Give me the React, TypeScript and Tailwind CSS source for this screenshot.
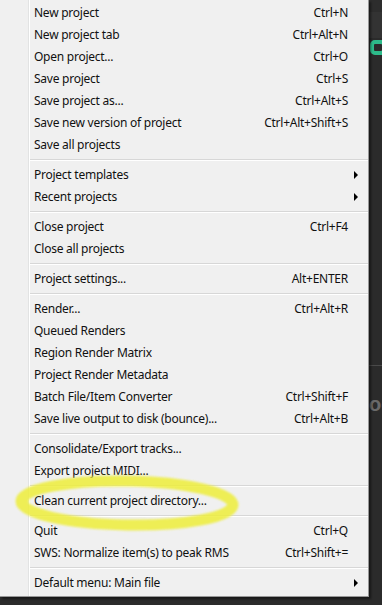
import React from "react";

type Item =
  | { type: "item"; label: string; shortcut?: string; sub?: boolean }
  | { type: "sep" };

const items: Item[] = [
  { type: "item", label: "New project", shortcut: "Ctrl+N" },
  { type: "item", label: "New project tab", shortcut: "Ctrl+Alt+N" },
  { type: "item", label: "Open project...", shortcut: "Ctrl+O" },
  { type: "item", label: "Save project", shortcut: "Ctrl+S" },
  { type: "item", label: "Save project as...", shortcut: "Ctrl+Alt+S" },
  { type: "item", label: "Save new version of project", shortcut: "Ctrl+Alt+Shift+S" },
  { type: "item", label: "Save all projects" },
  { type: "sep" },
  { type: "item", label: "Project templates", sub: true },
  { type: "item", label: "Recent projects", sub: true },
  { type: "sep" },
  { type: "item", label: "Close project", shortcut: "Ctrl+F4" },
  { type: "item", label: "Close all projects" },
  { type: "sep" },
  { type: "item", label: "Project settings...", shortcut: "Alt+ENTER" },
  { type: "sep" },
  { type: "item", label: "Render...", shortcut: "Ctrl+Alt+R" },
  { type: "item", label: "Queued Renders" },
  { type: "item", label: "Region Render Matrix" },
  { type: "item", label: "Project Render Metadata" },
  { type: "item", label: "Batch File/Item Converter", shortcut: "Ctrl+Shift+F" },
  { type: "item", label: "Save live output to disk (bounce)...", shortcut: "Ctrl+Alt+B" },
  { type: "sep" },
  { type: "item", label: "Consolidate/Export tracks..." },
  { type: "item", label: "Export project MIDI..." },
  { type: "sep" },
  { type: "item", label: "Clean current project directory..." },
  { type: "sep" },
  { type: "item", label: "Quit", shortcut: "Ctrl+Q" },
  { type: "item", label: "SWS: Normalize item(s) to peak RMS", shortcut: "Ctrl+Shift+=" },
  { type: "sep" },
  { type: "item", label: "Default menu: Main file", sub: true },
];

function Arrow() {
  return (
    <svg width="5" height="8" viewBox="0 0 5 8" className="block">
      <path d="M0 0 L4 4 L0 8 Z" fill="#000" />
    </svg>
  );
}

export default function App() {
  return (
    <div
      className="w-[382px] h-[605px] bg-[#2b2b2b] flex overflow-hidden"
      style={{ fontFamily: '"Noto Sans", "Open Sans", sans-serif' }}
    >
      <div className="relative w-[369px] shrink-0 self-start bg-[#f0f0f0] border-r border-b border-[#979797] shadow-[2px_2px_2px_rgba(0,0,0,0.45)] flex">
        <div className="w-[29px] shrink-0 border-r border-[#e2e3e3]" />
        <div className="flex-1 border-l border-white py-[2px]">
          {items.map((it, i) =>
            it.type === "sep" ? (
              <div key={i} className="h-[8px] flex flex-col justify-center">
                <div className="h-px bg-[#d7d7d7]" />
                <div className="h-px bg-white" />
              </div>
            ) : (
              <div key={i} className="h-[22px] flex items-center text-[12px] tracking-[-0.25px] text-[#111] leading-none">
                <span className="pl-[4px] flex-1 whitespace-nowrap">{it.label}</span>
                {it.shortcut && <span className="whitespace-nowrap">{it.shortcut}</span>}
                <span className="w-[20px] shrink-0 flex items-center pl-[6px]">
                  {it.sub && <Arrow />}
                </span>
              </div>
            )
          )}
        </div>
        <svg
          className="absolute left-0 top-0 pointer-events-none"
          width="368"
          height="597"
          viewBox="0 0 368 597"
        >
          <defs>
            <filter id="blur" x="-10%" y="-50%" width="120%" height="200%">
              <feGaussianBlur stdDeviation="1.3" />
            </filter>
          </defs>
          <g filter="url(#blur)" opacity="0.85">
            <ellipse
              cx="127"
              cy="503"
              rx="106"
              ry="22"
              fill="none"
              stroke="#eeee3a"
              strokeWidth="11"
              transform="rotate(1 127 503)"
            />
            <path
              d="M30 492 Q20 503 32 514"
              fill="none"
              stroke="#eeee3a"
              strokeWidth="6"
            />
          </g>
        </svg>
      </div>
      <div className="flex-1 flex flex-col">
        <div className="h-[12px] bg-[#2d2d2d]" />
        <div className="h-[26px] bg-[#333333]" />
        <div className="h-[18px] flex items-center">
          <div className="w-[16px] h-[15px] ml-[1px] rounded-[5px] border-[4px] border-[#2dbb8a]" />
        </div>
        <div className="h-[309px]" />
        <div className="h-px bg-[#4a4a4a]" />
        <div className="h-[28px]" />
        <div
          className="text-[20px] font-bold text-[#6a6a6a] leading-none whitespace-nowrap"
          style={{ fontFamily: '"Liberation Sans", sans-serif' }}
        >
          oc
        </div>
      </div>
    </div>
  );
}
